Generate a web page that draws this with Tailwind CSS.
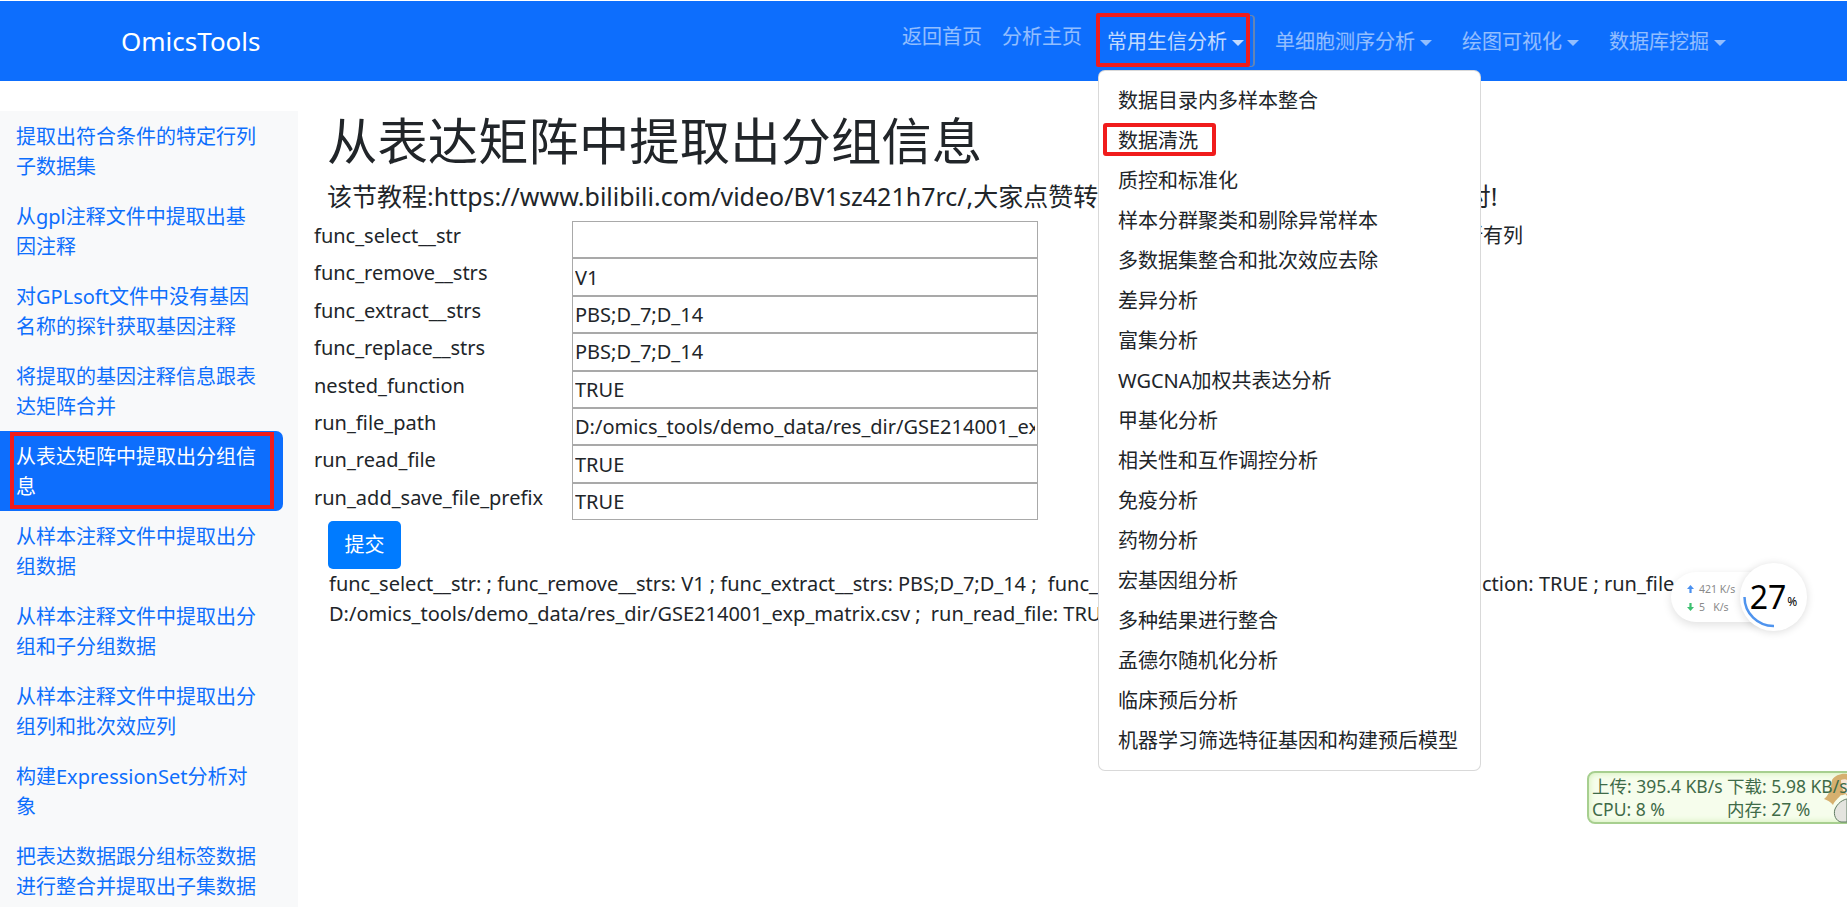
<!DOCTYPE html>
<html lang="zh-CN">
<head>
    <meta charset="UTF-8">
    <title>OmicsTools</title>
    <script src="https://cdn.jsdelivr.net/npm/@tailwindcss/browser@4"></script>
</head>
<body class="bg-white text-[#212529] text-[20px] leading-[30px] font-['Noto_Sans','Noto_Sans_CJK_SC',sans-serif]">
<div class="relative w-[1847px] h-[907px] overflow-hidden">

    <!-- Navbar -->
    <nav class="mt-px h-20 bg-[#0d6efd] flex items-start pr-[111px]">
        <a class="ml-[121px] mt-[25px] text-[26px] leading-[30px] text-white">OmicsTools</a>
        <ul class="ml-auto flex items-start text-white/55">
            <li class="mt-[21px] px-2.5">返回首页</li>
            <li class="mt-[21px] px-2.5">分析主页</li>
            <li class="relative mt-[14px] ml-[5px]">
                <a class="flex items-center h-[52px] pt-0.5 pl-2.5 pr-[9px] text-white/75 border-r-2 border-y border-[#8a8f94]/70 rounded-r-sm">常用生信分析<span class="ml-[5px] mt-px border-x-[6px] border-t-[6px] border-x-transparent border-t-white/75"></span></a>
                <div class="absolute -left-px -top-[2px] w-[154px] h-[54px] border-[4px] border-[#f01c1c] rounded-[2px]"></div>

                <!-- Dropdown -->
                <div class="absolute left-px top-[55px] w-[383px] h-[701px] py-2.5 bg-white border border-black/15 rounded-[7px] text-[#212529]">
                    <a class="block h-10 px-[19px] leading-10">数据目录内多样本整合</a>
                    <a class="relative block h-10 px-[19px] leading-10">数据清洗<span class="absolute left-[4px] top-[2px] w-[113px] h-[33px] border-[4px] border-[#f01c1c] rounded-[3px]"></span></a>
                    <a class="block h-10 px-[19px] leading-10">质控和标准化</a>
                    <a class="block h-10 px-[19px] leading-10">样本分群聚类和剔除异常样本</a>
                    <a class="block h-10 px-[19px] leading-10">多数据集整合和批次效应去除</a>
                    <a class="block h-10 px-[19px] leading-10">差异分析</a>
                    <a class="block h-10 px-[19px] leading-10">富集分析</a>
                    <a class="block h-10 px-[19px] leading-10">WGCNA加权共表达分析</a>
                    <a class="block h-10 px-[19px] leading-10">甲基化分析</a>
                    <a class="block h-10 px-[19px] leading-10">相关性和互作调控分析</a>
                    <a class="block h-10 px-[19px] leading-10">免疫分析</a>
                    <a class="block h-10 px-[19px] leading-10">药物分析</a>
                    <a class="block h-10 px-[19px] leading-10">宏基因组分析</a>
                    <a class="block h-10 px-[19px] leading-10">多种结果进行整合</a>
                    <a class="block h-10 px-[19px] leading-10">孟德尔随机化分析</a>
                    <a class="block h-10 px-[19px] leading-10">临床预后分析</a>
                    <a class="block h-10 px-[19px] leading-10">机器学习筛选特征基因和构建预后模型</a>
                </div>
            </li>
            <li class="mt-[14px] ml-[10px] flex items-center h-[52px] pt-0.5 px-2.5">单细胞测序分析<span class="ml-[5px] mt-px border-x-[6px] border-t-[6px] border-x-transparent border-t-white/55"></span></li>
            <li class="mt-[14px] ml-2.5 flex items-center h-[52px] pt-0.5 px-2.5">绘图可视化<span class="ml-[5px] mt-px border-x-[6px] border-t-[6px] border-x-transparent border-t-white/55"></span></li>
            <li class="mt-[14px] ml-2.5 flex items-center h-[52px] pt-0.5 px-2.5">数据库挖掘<span class="ml-[5px] mt-px border-x-[6px] border-t-[6px] border-x-transparent border-t-white/55"></span></li>
        </ul>
    </nav>

    <div class="mt-[30px] flex">
        <!-- Sidebar -->
        <aside class="w-[298px] h-[800px] shrink-0 bg-[#f8f9fa] overflow-hidden text-[#0d6efd]">
            <div class="w-[283px]">
                <a class="block pl-4 pr-5 pt-[11px] pb-[9px]">提取出符合条件的特定行列子数据集</a>
                <a class="block pl-4 pr-5 pt-[11px] pb-[9px]">从gpl注释文件中提取出基因注释</a>
                <a class="block pl-4 pr-5 pt-[11px] pb-[9px]">对GPLsoft文件中没有基因名称的探针获取基因注释</a>
                <a class="block pl-4 pr-5 pt-[11px] pb-[9px]">将提取的基因注释信息跟表达矩阵合并</a>
                <a class="relative block pl-4 pr-5 pt-[11px] pb-[9px] bg-[#0d6efd] text-white rounded-r-[7px]">从表达矩阵中提取出分组信息<span class="absolute left-2.5 top-px w-[264px] h-[77px] border-[4px] border-[#f01c1c]"></span></a>
                <a class="block pl-4 pr-5 pt-[11px] pb-[9px]">从样本注释文件中提取出分组数据</a>
                <a class="block pl-4 pr-5 pt-[11px] pb-[9px]">从样本注释文件中提取出分组和子分组数据</a>
                <a class="block pl-4 pr-5 pt-[11px] pb-[9px]">从样本注释文件中提取出分组列和批次效应列</a>
                <a class="block pl-4 pr-5 pt-[11px] pb-[9px]">构建ExpressionSet分析对象</a>
                <a class="block pl-4 pr-5 pt-[11px] pb-[9px]">把表达数据跟分组标签数据进行整合并提取出子集数据</a>
            </div>
        </aside>

        <!-- Main content -->
        <main class="pl-4 grow min-w-0">
            <h1 class="ml-[13px] text-[50.4px] leading-[60px] mb-2.5">从表达矩阵中提取出分组信息</h1>
            <h5 class="ml-[13px] text-[25px] leading-[30px] mb-2.5 whitespace-nowrap">该节教程:https://www.bilibili.com/video/BV1sz421h7rc/,大家点赞转发收藏一下,谢谢大家,<span class="ml-1">记得都要核对!</span></h5>

            <div class="grid grid-cols-[258px_466px_485px] auto-rows-[37.4px]">
                <label>func_select__str</label>
                <input class="h-[37.4px] w-full px-[2px] border border-[#a9a9a9]" value="">
                <span class="text-right">默认保留所有列</span>
                <label>func_remove__strs</label>
                <input class="h-[37.4px] w-full px-[2px] border border-[#a9a9a9]" value="V1">
                <span></span>
                <label>func_extract__strs</label>
                <input class="h-[37.4px] w-full px-[2px] border border-[#a9a9a9]" value="PBS;D_7;D_14">
                <span></span>
                <label>func_replace__strs</label>
                <input class="h-[37.4px] w-full px-[2px] border border-[#a9a9a9]" value="PBS;D_7;D_14">
                <span></span>
                <label>nested_function</label>
                <input class="h-[37.4px] w-full px-[2px] border border-[#a9a9a9]" value="TRUE">
                <span></span>
                <label>run_file_path</label>
                <input class="h-[37.4px] w-full px-[2px] border border-[#a9a9a9]" value="D:/omics_tools/demo_data/res_dir/GSE214001_exp_matrix.csv">
                <span></span>
                <label>run_read_file</label>
                <input class="h-[37.4px] w-full px-[2px] border border-[#a9a9a9]" value="TRUE">
                <span></span>
                <label>run_add_save_file_prefix</label>
                <input class="h-[37.4px] w-full px-[2px] border border-[#a9a9a9]" value="TRUE">
                <span></span>
            </div>

            <button class="block ml-[14px] mt-px w-[73px] h-12 bg-[#007bff] text-white rounded-[5px]">提交</button>
            <p class="ml-[15px] w-[1450px]">func_select__str: ; func_remove__strs: V1 ; func_extract__strs: PBS;D_7;D_14 ; <span class="ml-1.5 mr-1">func_replace__strs: PBS;D_7;D_14 ;</span> nested_function: TRUE ; run_file_path:<br>D:/omics_tools/demo_data/res_dir/GSE214001_exp_matrix.csv ; <span class="ml-[5px]">run_read_file: TRUE ; run_add_save_file_prefix: TRUE</span></p>
        </main>
    </div>

    <!-- Speed pill -->
    <div class="absolute left-[1671px] top-[572px] w-[90px] h-[50px] pl-4 pt-2 bg-white rounded-l-[25px] shadow-[0_3px_10px_rgba(0,0,0,0.12)] text-[10.5px] leading-[18px] text-[#8a8a8a]">
        <div class="flex items-center gap-[5px]">
            <svg width="7" height="8" viewBox="0 0 7 8"><path d="M3.5 0 7 4H4.6v4H2.4V4H0z" fill="#4a90f0"/></svg>
            <span>421 K/s</span>
        </div>
        <div class="flex items-center gap-[5px]">
            <svg width="7" height="8" viewBox="0 0 7 8"><path d="M3.5 8 7 4H4.6V0H2.4v4H0z" fill="#3cc070"/></svg>
            <span class="whitespace-pre">5   K/s</span>
        </div>
    </div>
    <div class="absolute left-[1740px] top-[563px] w-[67px] h-[68px] flex items-center justify-center bg-white rounded-full shadow-[0_1px_8px_rgba(0,0,0,0.14)] text-black">
        <svg class="absolute left-0 top-0" width="67" height="68" viewBox="0 0 67 68"><path d="M4.5 34A29 29 0 0 0 34 63" fill="none" stroke="#4f94ee" stroke-width="2.5"/></svg>
        <span class="text-[32px] leading-none">27</span><span class="text-[12px] leading-none mt-[10px] ml-[1px]">%</span>
    </div>

    <!-- Network monitor -->
    <div class="absolute left-[1587px] top-[771px] w-[270px] h-[53px] pl-[3px] border-2 border-[#a7cf8f] rounded-[8px] bg-[#f6fdec] shadow-[inset_0_0_6px_#cdeeb0] text-[#3f6b48] text-[17.5px] leading-[23px] pt-[2px] whitespace-nowrap">
        <div class="relative z-10 flex"><span class="w-[135px]">上传: 395.4 KB/s</span><span>下载: 5.98 KB/s</span></div>
        <div class="relative z-10 flex"><span class="w-[135px]">CPU: 8 %</span><span>内存: 27 %</span></div>
    </div>
    <svg class="absolute left-[1822px] top-[772px]" width="25" height="52" viewBox="0 0 25 52">
        <path d="M10 8C13 3 20 1 25 2V24C23 20 22 24 19 23C16 27 13 28 11 33C9 30 5 28 2 27C6 24 9 18 10 8Z" fill="#d6b06f"/>
        <path d="M19 8C21 7 24 7 25 8V22C22 21 19 16 19 8Z" fill="#f8e6d6"/>
        <path d="M13 37C17 28 25 27 25 27V50H19C14 49 11 43 13 37Z" fill="#e4e4df" stroke="#5f7a62" stroke-width="1"/>
    </svg>
</div>
</body>
</html>
